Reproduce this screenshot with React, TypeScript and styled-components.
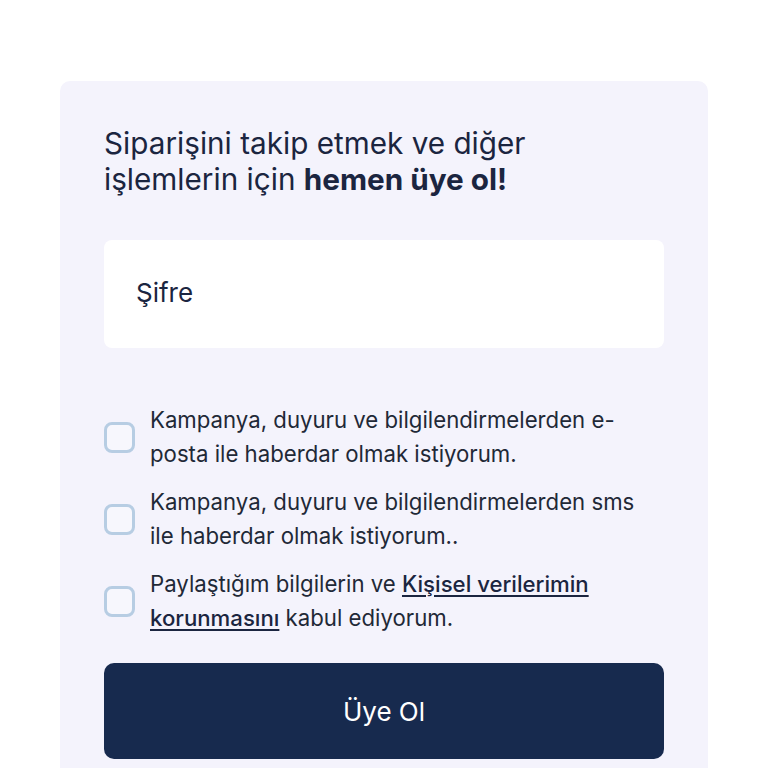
import React from "react";
import styled, { createGlobalStyle } from "styled-components";

const Global = createGlobalStyle`
  html, body { margin: 0; padding: 0; background: #ffffff; }
  body { font-family: Inter, "Noto Sans", sans-serif; -webkit-font-smoothing: antialiased; }
  * { box-sizing: border-box; }
`;

const Page = styled.div`
  padding: 81px 60px 0 60px;
  height: 768px;
  overflow: hidden;
`;

const Card = styled.div`
  background: #f4f3fc;
  border-radius: 10px;
  padding: 44px 44px 40px 44px;
  display: flex;
  flex-direction: column;
`;

const Heading = styled.h2`
  margin: 0;
  font-size: 29.7px;
  line-height: 36px;
  font-weight: 400;
  color: #1b2540;
  b { font-weight: 700; }
`;

const Input = styled.input`
  margin-top: 43px;
  height: 108px;
  width: 100%;
  border: none;
  border-radius: 8px;
  background: #ffffff;
  padding: 0 32px 4px 32px;
  font-family: Inter, sans-serif;
  font-size: 26px;
  color: #1b2540;
  outline: none;
  &::placeholder { color: #1b2540; opacity: 1; }
`;

const Checks = styled.div`
  margin-top: 55px;
  display: flex;
  flex-direction: column;
  gap: 14px;
`;

const Row = styled.label`
  display: flex;
  align-items: center;
  gap: 15px;
`;

const Box = styled.span`
  flex: 0 0 31px;
  width: 31px;
  height: 31px;
  border: 3px solid #b7cde3;
  border-radius: 8px;
  background: #f7f7fd;
`;

const Text = styled.span`
  font-size: 22.2px;
  line-height: 34px;
  color: #1f2937;
  a { color: #1b2540; font-weight: 500; text-decoration: underline; text-underline-offset: 3px; }
`;

const Button = styled.button`
  margin-top: 28px;
  height: 96px;
  width: 100%;
  border: none;
  border-radius: 10px;
  background: #172a4e;
  color: #ffffff;
  font-family: Inter, sans-serif;
  font-size: 26px;
  font-weight: 400;
`;

export default function App() {
  return (
    <>
      <Global />
      <Page>
        <Card>
          <Heading>
            Siparişini takip etmek ve diğer
            <br />
            işlemlerin için <b>hemen üye ol!</b>
          </Heading>
          <Input placeholder="Şifre" type="password" />
          <Checks>
            <Row>
              <Box />
              <Text>
                Kampanya, duyuru ve bilgilendirmelerden e-
                <br />
                posta ile haberdar olmak istiyorum.
              </Text>
            </Row>
            <Row>
              <Box />
              <Text>
                Kampanya, duyuru ve bilgilendirmelerden sms
                <br />
                ile haberdar olmak istiyorum..
              </Text>
            </Row>
            <Row>
              <Box />
              <Text>
                Paylaştığım bilgilerin ve <a>Kişisel verilerimin</a>
                <br />
                <a>korunmasını</a> kabul ediyorum.
              </Text>
            </Row>
          </Checks>
          <Button>Üye Ol</Button>
        </Card>
      </Page>
    </>
  );
}
